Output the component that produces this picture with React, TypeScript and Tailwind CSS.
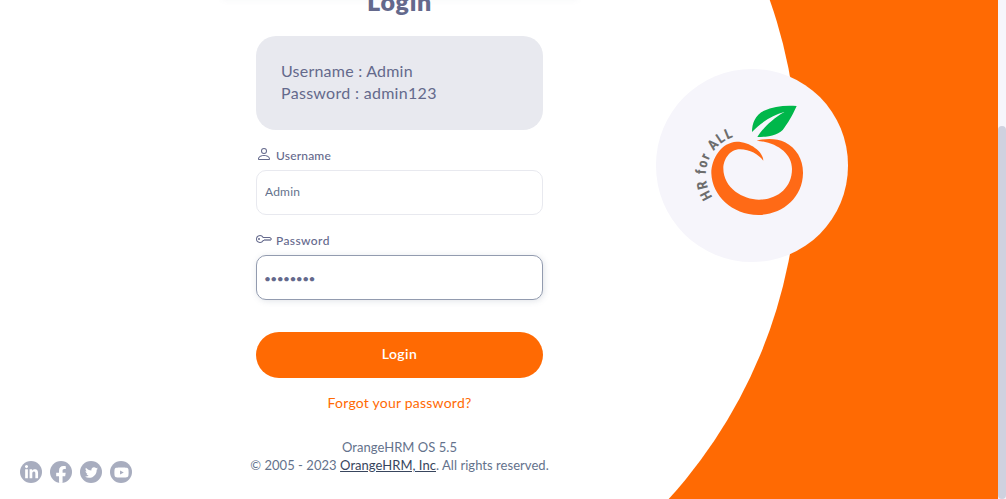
import React from "react";
import { BsKey, BsPerson } from "react-icons/bs";
import { FaFacebookF, FaLinkedinIn, FaTwitter, FaYoutube } from "react-icons/fa";

function BrandLogo() {
  return (
    <svg viewBox="0 0 360 375" className="h-[125px] w-[120px] overflow-visible" aria-label="HR for ALL">
      <path
        fill="#00b74a"
        d="M186 111C186 86 195 60 222 47C250 34 285 30 320 33C312 50 300 76 283 98C270 120 235 126 202 126C215 105 245 72 283 51C250 60 215 80 186 111Z"
      />
      <path
        fill="#ff6a16"
        d="M200 137C225 130 260 129 285 142C320 160 340 195 339 235C338 310 275 360 205 360C125 360 66 300 64 235C64 190 95 142 140 140C180 140 220 170 220 197C205 178 180 163 150 163C118 163 100 195 100 220C100 280 160 314 207 314C260 314 306 280 306 222C306 175 260 142 200 137Z"
      />
      <path id="slogan-arc" fill="none" d="M68 306A119 119 0 0 1 130 126" />
      <text className="fill-[#6d6d6d] font-['Liberation_Sans_Narrow','Roboto_Condensed','Roboto',sans-serif] text-[43px] font-bold">
        <textPath href="#slogan-arc" textLength="221" lengthAdjust="spacing">
          HR for ALL
        </textPath>
      </text>
    </svg>
  );
}

function Social({ children }: { children: React.ReactNode }) {
  return (
    <a className="flex size-[22px] items-center justify-center overflow-hidden rounded-full bg-[#a8adbf] text-white">
      {children}
    </a>
  );
}

export default function App() {
  return (
    <div className="relative flex h-screen w-screen overflow-hidden bg-[#ff6a03] font-['Lato',sans-serif] text-[#64728c]">
      <div className="absolute -left-[194px] -top-[331px] size-[992px] rounded-full bg-white" />
      <div className="absolute -top-[10px] left-[222px] h-[10px] w-[356px] shadow-[0_0_6px_rgba(100,114,140,0.06)]" />

      <aside className="relative flex w-[240px] items-end gap-2 pb-4 pl-5">
        <Social><FaLinkedinIn className="size-[15px]" /></Social>
        <Social><FaFacebookF className="mt-[5px] size-[18px]" /></Social>
        <Social><FaTwitter className="size-[13px]" /></Social>
        <Social><FaYoutube className="size-[15px]" /></Social>
      </aside>

      <main className="relative flex w-[319px] shrink-0 flex-col items-center">
        <h1 className="-mt-[16px] h-[52px] text-[25px] font-extrabold leading-[34px] tracking-[0.7px] text-[#64698c]">Login</h1>

        <div className="h-[94px] w-[287px] shrink-0 rounded-[20px] bg-[#e8e9ef] px-[25px] pt-6 text-[16px] leading-[22px] text-[#64698c]">
          <p className="tracking-[0.22px]">Username : Admin</p>
          <p className="tracking-[0.3px]">Password : admin123</p>
        </div>

        <label className="mt-[17px] flex h-[18px] w-[287px] items-center gap-1 text-[12px] font-medium text-[#64698c]">
          <BsPerson className="mb-[4px] size-4" />
          <span className="tracking-[0.18px]">Username</span>
        </label>
        <input
          defaultValue="Admin"
          className="mt-[5px] h-[45px] w-[287px] shrink-0 rounded-[10px] border border-[#e8e9ef] bg-white px-2 pb-[2px] text-[12px] tracking-[0.2px] outline-none"
        />

        <label className="mt-[17px] flex h-[18px] w-[287px] items-center gap-1 text-[12px] font-medium text-[#64698c]">
          <BsKey className="mb-[4px] size-4" />
          <span className="tracking-[0.4px]">Password</span>
        </label>
        <input
          type="password"
          defaultValue="admin123"
          className="mt-[5px] h-[45px] w-[287px] shrink-0 rounded-[10px] border border-[#929baf] bg-white pl-[7px] pr-2 pt-[2px] text-[12px] tracking-[-0.6px] text-[#64698c] shadow-[1px_1px_6px_rgba(100,114,140,0.2)] outline-none"
        />

        <button className="mt-8 h-[46px] w-[287px] shrink-0 rounded-full bg-[#ff6a03] pb-[3px] text-[14px] font-semibold tracking-[0.45px] text-white">
          Login
        </button>
        <a className="mt-[15px] text-[14px] leading-[20px] tracking-[0.22px] text-[#ff6a03]">Forgot your password?</a>
        <footer className="mt-[25px] whitespace-nowrap text-center text-[13px] leading-[18px] tracking-[0.04px]">
          <p>OrangeHRM OS 5.5</p>
          <p>
            © 2005 - 2023 <a className="text-[#38455d] underline">OrangeHRM, Inc</a>. All rights reserved.
          </p>
        </footer>
      </main>

      <section className="relative ml-[97px] mt-[69px] flex h-[193px] w-[192px] shrink-0 rounded-full bg-[#f6f5fb] pl-[34px] pt-[26px]">
        <BrandLogo />
      </section>

      <div className="relative ml-auto h-full w-2 bg-[#f6f5fb] pt-[126px]">
        <div className="h-[373px] rounded-full bg-[#cfd1df]" />
      </div>
    </div>
  );
}
